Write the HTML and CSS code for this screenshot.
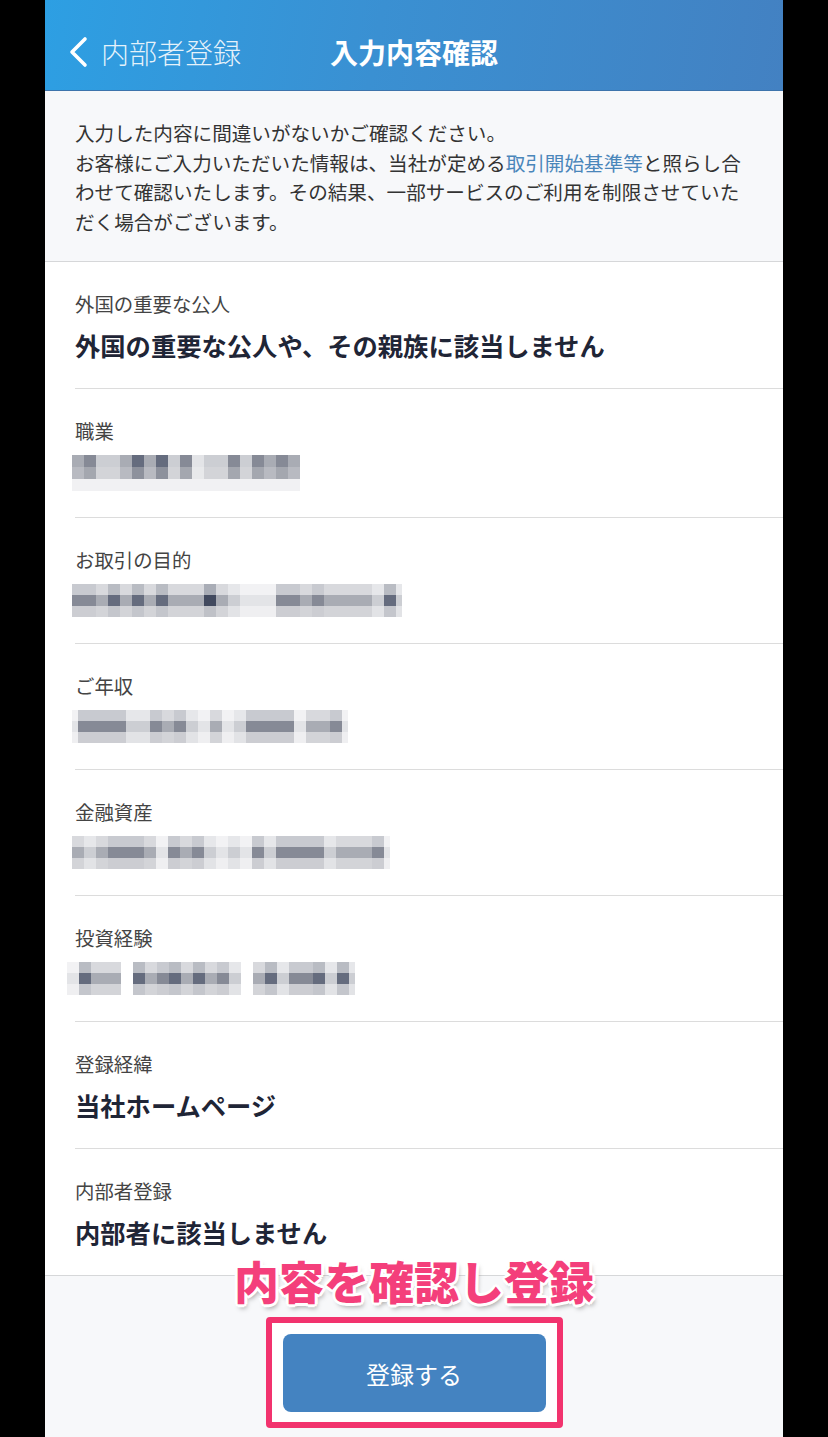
FILE: index.html
```html
<!DOCTYPE html>
<html lang="ja">

<head>
    <meta charset="UTF-8">
    <meta name="viewport" content="width=device-width, initial-scale=1.0">
    <title>入力内容確認</title>
    <link rel="stylesheet" href="styles.css">
</head>

<body>
    <div class="page">
        <header class="top-bar">
            <a class="back-link" href="#">
                <svg class="chevron" width="22" height="32" viewBox="0 0 22 32">
                    <path d="M18 3 L5 16 L18 29" fill="none" stroke="#fff" stroke-width="3.6" stroke-linecap="round" stroke-linejoin="round" />
                </svg>
                <span>内部者登録</span>
            </a>
            <h1 class="title">入力内容確認</h1>
            <div></div>
        </header>

        <section class="intro">
            <p>入力した内容に間違いがないかご確認ください。<br>お客様にご入力いただいた情報は、当社が定める<a href="#">取引開始基準等</a>と照らし合わせて確認いたします。その結果、一部サービスのご利用を制限させていただく場合がございます。</p>
        </section>

        <section class="items">
            <div class="item">
                <div class="item-label">外国の重要な公人</div>
                <div class="item-value">外国の重要な公人や、その親族に該当しません</div>
            </div>

            <div class="item">
                <div class="item-label">職業</div>
                <!-- blurred values -->
                <div class="mosaic tall">
                    <i class="c3"></i><i class="c4"></i><i class="c2"></i><i class="c2"></i><i class="c3"></i><i class="c5"></i><i class="c3"></i><i class="c5"></i><i class="c2"></i><i class="c4"></i><i class="c1"></i><i class="c2"></i><i class="c2"></i><i class="c4"></i><i class="c2"></i><i class="c4"></i><i class="c3"></i><i class="c4"></i><i class="c3"></i>
                </div>
            </div>

            <div class="item">
                <div class="item-label">お取引の目的</div>
                <div class="mosaic">
                    <i class="c4"></i><i class="c4"></i><i class="c3"></i><i class="c5"></i><i class="c3"></i><i class="c5"></i><i class="c3"></i><i class="c5"></i><i class="c3"></i><i class="c3"></i><i class="c3"></i><i class="c6"></i><i class="c3"></i><i class="c2"></i><i class="c1"></i><i class="c1"></i><i class="c1"></i><i class="c4"></i><i class="c4"></i><i class="c3"></i><i class="c4"></i><i class="c3"></i><i class="c3"></i><i class="c3"></i><i class="c3"></i><i class="c2"></i><i class="c5"></i><i class="c2 half"></i>
                </div>
            </div>

            <div class="item">
                <div class="item-label">ご年収</div>
                <div class="mosaic">
                    <i class="c1 half"></i><i class="c4"></i><i class="c4"></i><i class="c4"></i><i class="c4"></i><i class="c2"></i><i class="c2"></i><i class="c4"></i><i class="c3"></i><i class="c4"></i><i class="c2"></i><i class="c1"></i><i class="c3"></i><i class="c1"></i><i class="c2"></i><i class="c4"></i><i class="c4"></i><i class="c4"></i><i class="c4"></i><i class="c1"></i><i class="c3"></i><i class="c3"></i><i class="c4"></i><i class="c1 half"></i>
                </div>
            </div>

            <div class="item">
                <div class="item-label">金融資産</div>
                <div class="mosaic">
                    <i class="c3"></i><i class="c2"></i><i class="c3"></i><i class="c4"></i><i class="c4"></i><i class="c4"></i><i class="c3"></i><i class="c1"></i><i class="c4"></i><i class="c3"></i><i class="c4"></i><i class="c2"></i><i class="c1"></i><i class="c2"></i><i class="c1"></i><i class="c4"></i><i class="c2"></i><i class="c4"></i><i class="c4"></i><i class="c4"></i><i class="c4"></i><i class="c2"></i><i class="c3"></i><i class="c3"></i><i class="c3"></i><i class="c4"></i><i class="c1 half"></i>
                </div>
            </div>

            <div class="item">
                <div class="item-label">投資経験</div>
                <div class="mosaic shift">
                    <i class="c1"></i><i class="c5"></i><i class="c3"></i><i class="c3"></i><i class="c3 half"></i><i class="c0"></i><i class="c5"></i><i class="c3"></i><i class="c4"></i><i class="c5"></i><i class="c3"></i><i class="c5"></i><i class="c3"></i><i class="c4"></i><i class="c2"></i><i class="c0"></i><i class="c3"></i><i class="c5"></i><i class="c2"></i><i class="c4"></i><i class="c4"></i><i class="c5"></i><i class="c2"></i><i class="c5"></i><i class="c2 half"></i>
                </div>
            </div>

            <div class="item">
                <div class="item-label">登録経緯</div>
                <div class="item-value">当社ホームページ</div>
            </div>

            <div class="item last">
                <div class="item-label">内部者登録</div>
                <div class="item-value">内部者に該当しません</div>
            </div>
        </section>

        <footer class="actions">
            <div class="note">内容を確認し登録</div>
            <div class="highlight">
                <button class="submit-btn">登録する</button>
            </div>
        </footer>
    </div>
</body>

</html>
```

FILE: styles.css
```css
body {
    margin: 0;
    background-color: #000;
    font-family: "Noto Sans CJK JP", "Noto Sans", sans-serif;
    color: #333;
}

.page {
    width: 738px;
    margin: 0 auto;
    background: #fff;
}

/* header */
.top-bar {
    height: 76px;
    padding-top: 14px;
    display: grid;
    grid-template-columns: 1fr auto 1fr;
    align-items: center;
    background: linear-gradient(100deg, #2d9fe3 0%, #3a90d2 45%, #4381c2 100%);
    border-bottom: 1px solid #3d74ac;
}

.back-link {
    display: flex;
    align-items: center;
    gap: 12px;
    padding-left: 22px;
    color: rgba(255, 255, 255, 0.88);
    text-decoration: none;
    font-size: 28px;
    font-weight: 300;
}

.chevron {
    display: block;
}

.title {
    margin: 0;
    color: #fff;
    font-size: 28px;
    font-weight: bold;
}

/* intro text */
.intro {
    background: #f7f8fa;
    padding: 27px 30px 25px;
    border-bottom: 1px solid #d6d7d9;
}

.intro p {
    margin: 0;
    font-size: 19.6px;
    line-height: 29.5px;
    color: #333;
}

.intro a {
    color: #4a86ba;
    text-decoration: none;
}

/* confirmation rows */
.item {
    margin-left: 30px;
    padding: 28px 30px 26px 0;
    border-bottom: 1px solid #dcdcdc;
}

.item.last {
    border-bottom: none;
}

.item-label {
    font-size: 19.4px;
    line-height: 28px;
    margin-bottom: 10px;
    color: #444;
}

.item-value {
    font-size: 25.3px;
    line-height: 34px;
    font-weight: bold;
    color: #1f2536;
}

.mosaic {
    display: flex;
    height: 33px;
    margin: 1px 0 0 -3px;
}

.mosaic.shift {
    margin-left: -8px;
}

.mosaic i {
    width: 12px;
    flex-shrink: 0;
    background: linear-gradient(var(--t) 0 11px, var(--m) 11px 22px, var(--b) 22px);
}

.mosaic i.half {
    width: 6px;
}

.mosaic.tall {
    height: 36px;
    margin-top: 4px;
}

.mosaic.tall i {
    background: linear-gradient(var(--m) 0 12px, var(--h) 12px 24px, #f1f1f3 24px);
}

.c0 { --t: #fff; --m: #fff; --h: #fff; --b: #fff; }
.c1 { --t: #f2f2f4; --m: #e3e4e7; --h: #e8e9eb; --b: #efeff1; }
.c2 { --t: #e6e7ea; --m: #ccced3; --h: #d3d4d8; --b: #e2e3e6; }
.c3 { --t: #d8d9dd; --m: #a9acb4; --h: #b8bac1; --b: #d3d4d8; }
.c4 { --t: #c8cad0; --m: #868a96; --h: #a4a7af; --b: #cccdd2; }
.c5 { --t: #b9bcc3; --m: #656c7e; --h: #8d919c; --b: #c4c6cc; }
.c6 { --t: #a9adb6; --m: #424a5f; --h: #7d8290; --b: #bfc1c7; }

/* bottom action area */
.actions {
    position: relative;
    background: #f7f8fa;
    border-top: 1px solid #d6d7d9;
    padding: 41px 0 24px;
    display: flex;
    justify-content: center;
}

.note {
    position: absolute;
    top: -20px;
    left: 0;
    right: 0;
    text-align: center;
    font-size: 45px;
    line-height: 50px;
    font-weight: 900;
    color: #f43f7b;
    text-shadow: 3px 0 #fff, -3px 0 #fff, 0 3px #fff, 0 -3px #fff,
        2px 2px #fff, -2px -2px #fff, 2px -2px #fff, -2px 2px #fff,
        2px 4px 5px rgba(0, 0, 0, 0.35);
}

.highlight {
    border: 6px solid #f2336e;
    border-radius: 4px;
    background: #fff;
    padding: 11px 11px 10px;
}

.submit-btn {
    display: block;
    width: 263px;
    height: 78px;
    border: none;
    border-radius: 8px;
    background: #4483c1;
    color: #fff;
    font-family: inherit;
    font-size: 24px;
    cursor: pointer;
}
```
